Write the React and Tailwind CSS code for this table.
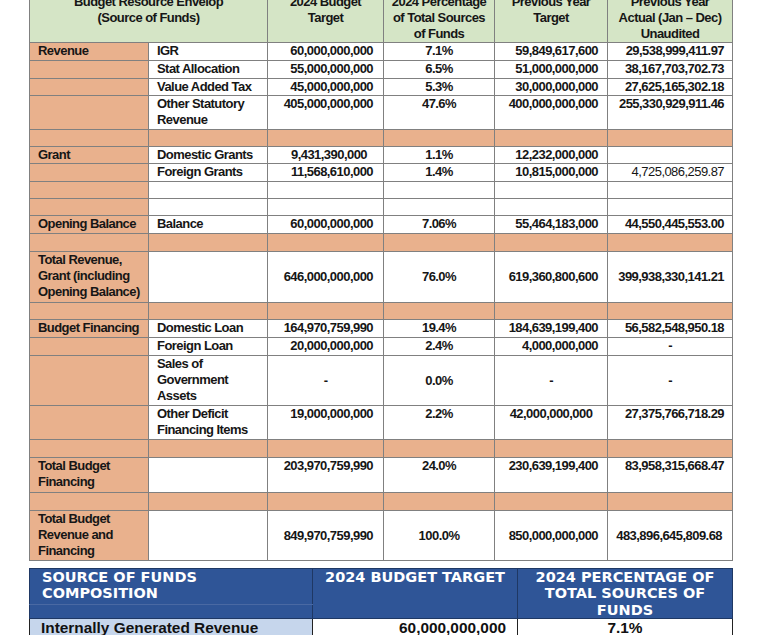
import React from "react";

const ORANGE = "bg-[#e9b18d]";
const cell = "border border-[#808080] p-0 leading-[16px]";

const rows = [
  { h: "h-[18px]", c1: "Revenue", c2: "IGR", c3: "60,000,000,000", c4: "7.1%", c5: "59,849,617,600", c6: "29,538,999,411.97" },
  { h: "h-[18px]", c2: "Stat Allocation", c3: "55,000,000,000", c4: "6.5%", c5: "51,000,000,000", c6: "38,167,703,702.73" },
  { h: "h-[17px]", c2: "Value Added Tax", c3: "45,000,000,000", c4: "5.3%", c5: "30,000,000,000", c6: "27,625,165,302.18" },
  { h: "h-[34px]", c2: "Other Statutory Revenue", c3: "405,000,000,000", c4: "47.6%", c5: "400,000,000,000", c6: "255,330,929,911.46" },
  { sep: true, h: "h-[17px]" },
  { h: "h-[17px]", c1: "Grant", c2: "Domestic Grants", c3: "9,431,390,000", c3x: "pr-[16px]", c4: "1.1%", c5: "12,232,000,000", c6: "" },
  { h: "h-[18px]", c2: "Foreign Grants", c3: "11,568,610,000", c4: "1.4%", c5: "10,815,000,000", c6: "4,725,086,259.87", c6x: "font-normal" },
  { h: "h-[17px]" },
  { h: "h-[17px]" },
  { h: "h-[18px]", c1: "Opening Balance", c2: "Balance", c3: "60,000,000,000", c4: "7.06%", c5: "55,464,183,000", c6: "44,550,445,553.00" },
  { sep: true, h: "h-[18px]" },
  { h: "h-[51px]", mid: true, c1: "Total Revenue, Grant (including Opening Balance)", c3: "646,000,000,000", c4: "76.0%", c5: "619,360,800,600", c6: "399,938,330,141.21" },
  { sep: true, h: "h-[17px]" },
  { h: "h-[18px]", c1: "Budget Financing", c2: "Domestic Loan", c3: "164,970,759,990", c4: "19.4%", c5: "184,639,199,400", c6: "56,582,548,950.18" },
  { h: "h-[18px]", c2: "Foreign Loan", c3: "20,000,000,000", c3x: "pr-[3px]", c4: "2.4%", c5: "4,000,000,000", c6: "-", c6x: "!text-center !pr-0" },
  { h: "h-[50px]", mid: true, c2: "Sales of Government Assets", c3: "-", c3x: "!text-center !pr-0", c4: "0.0%", c5: "-", c5x: "!text-center !pr-0", c6: "-", c6x: "!text-center !pr-0" },
  { h: "h-[34px]", c2: "Other Deficit Financing Items", c3: "19,000,000,000", c4: "2.2%", c5: "42,000,000,000", c5x: "!text-center !pr-0", c6: "27,375,766,718.29" },
  { sep: true, h: "h-[18px]" },
  { h: "h-[35px]", c1: "Total Budget Financing", c3: "203,970,759,990", c4: "24.0%", c5: "230,639,199,400", c6: "83,958,315,668.47" },
  { sep: true, h: "h-[18px]" },
  { h: "h-[50px]", mid: true, c1: "Total Budget Revenue and Financing", c3: "849,970,759,990", c4: "100.0%", c5: "850,000,000,000", c6: "483,896,645,809.68", c6x: "pr-[10px]" },
];

function EnvelopeTable() {
  return (
    <table
      className="table-fixed border-collapse -mt-[7px] ml-[29px] w-[703px] text-[13px] tracking-[-0.55px] font-bold text-[#161616]"
      style={{ fontFamily: '"Liberation Sans", Arial, sans-serif' }}
    >
      <colgroup>
        <col className="w-[119px]" />
        <col className="w-[119px]" />
        <col className="w-[116px]" />
        <col className="w-[111px]" />
        <col className="w-[113px]" />
        <col className="w-[125px]" />
      </colgroup>
      <thead>
        <tr className="h-[48px] bg-[#d5e5c6]">
          <th colSpan={2} className={`${cell} align-top text-center font-bold whitespace-nowrap`}>
            Budget Resource Envelop
            <br />
            (Source of Funds)
          </th>
          <th className={`${cell} align-top text-center font-bold whitespace-nowrap`}>
            2024 Budget
            <br />
            Target
          </th>
          <th className={`${cell} align-top text-center font-bold whitespace-nowrap`}>
            2024 Percentage
            <br />
            of Total Sources
            <br />
            of Funds
          </th>
          <th className={`${cell} align-top text-center font-bold whitespace-nowrap`}>
            Previous Year
            <br />
            Target
          </th>
          <th className={`${cell} align-top text-center font-bold whitespace-nowrap`}>
            Previous Year
            <br />
            Actual (Jan – Dec)
            <br />
            Unaudited
          </th>
        </tr>
      </thead>
      <tbody>
        {rows.map((r, i) => {
          if (r.sep) {
            return (
              <tr key={i} className={`${r.h} ${ORANGE}`}>
                <td className={cell}></td>
                <td className={cell}></td>
                <td className={cell}></td>
                <td className={cell}></td>
                <td className={cell}></td>
                <td className={cell}></td>
              </tr>
            );
          }
          const va = r.mid ? "align-middle" : "align-top";
          return (
            <tr key={i} className={r.h}>
              <td className={`${cell} align-top ${ORANGE} pl-2 text-left`}>{r.c1}</td>
              <td className={`${cell} align-top bg-white pl-2 text-left`}>{r.c2}</td>
              <td className={`${cell} ${va} bg-white text-right pr-[10px] whitespace-nowrap ${r.c3x || ""}`}>{r.c3}</td>
              <td className={`${cell} ${va} bg-white text-center`}>{r.c4}</td>
              <td className={`${cell} ${va} bg-white text-right pr-[9px] whitespace-nowrap ${r.c5x || ""}`}>{r.c5}</td>
              <td className={`${cell} ${va} bg-white text-right pr-[8px] whitespace-nowrap ${r.c6x || ""}`}>{r.c6}</td>
            </tr>
          );
        })}
      </tbody>
    </table>
  );
}

function CompositionTable() {
  const head = "border border-[#1f3864] p-0 align-top text-white font-bold bg-[#2f5597]";
  return (
    <table className="table-fixed border-collapse mt-[7px] ml-[29px] w-[703px]">
      <colgroup>
        <col className="w-[283px]" />
        <col className="w-[205px]" />
        <col className="w-[215px]" />
      </colgroup>
      <thead className="text-[14.5px] leading-[16.3px]" style={{ fontFamily: '"DejaVu Sans", sans-serif' }}>
        <tr className="h-[36px]">
          <th className={`${head} text-left pl-3 border-b-[#4a69a3] whitespace-nowrap`}>
            SOURCE OF FUNDS
            <br />
            COMPOSITION
          </th>
          <th rowSpan={2} className={`${head} text-center whitespace-nowrap`}>
            2024 BUDGET TARGET
          </th>
          <th rowSpan={2} className={`${head} text-center whitespace-nowrap`}>
            2024 PERCENTAGE OF
            <br />
            TOTAL SOURCES OF
            <br />
            FUNDS
          </th>
        </tr>
        <tr className="h-[14px]">
          <th className={`${head} border-t-[#4a69a3]`}></th>
        </tr>
      </thead>
      <tbody className="text-[15.4px] font-bold text-[#111]" style={{ fontFamily: '"Liberation Sans", Arial, sans-serif' }}>
        <tr className="h-[24px]">
          <td className="border border-[#222] bg-[#c6d6ec] pl-[11px] align-top leading-[18px]">Internally Generated Revenue</td>
          <td className="border border-[#222] bg-white text-right pr-[11px] align-top leading-[18px]">60,000,000,000</td>
          <td className="border border-[#222] bg-white text-center align-top leading-[18px]">7.1%</td>
        </tr>
      </tbody>
    </table>
  );
}

export default function App() {
  return (
    <div className="h-[635px] w-[770px] overflow-hidden bg-white">
      <EnvelopeTable />
      <CompositionTable />
    </div>
  );
}
